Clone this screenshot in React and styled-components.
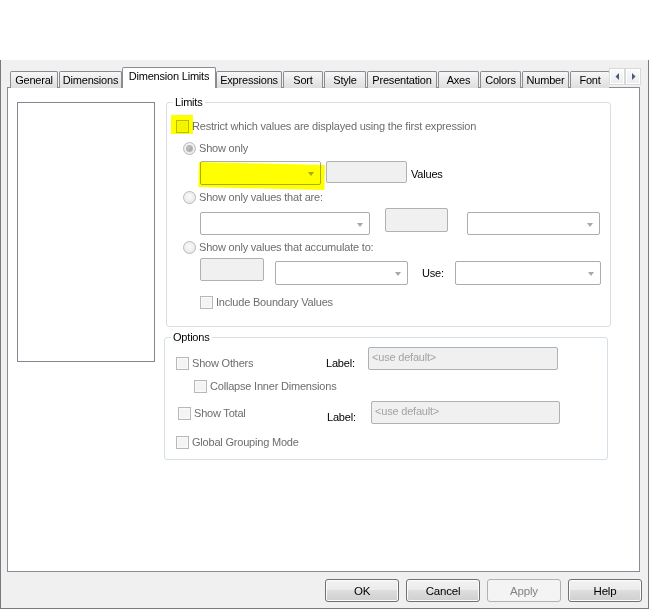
import React from 'react';
import styled, { createGlobalStyle } from 'styled-components';

const GlobalStyle = createGlobalStyle`
  html, body { margin: 0; padding: 0; background: #ffffff; }
  body {
    font-family: "Liberation Sans", Arial, sans-serif;
    font-size: 11px;
    letter-spacing: -0.2px;
    color: #000;
  }
  * { box-sizing: border-box; }
`;

const Screen = styled.div`
  width: 650px;
  height: 609px;
  padding-top: 60px;
  background: #fff;
`;

const Dialog = styled.div`
  width: 649px;
  height: 549px;
  background: #f0f0f0;
  border: 1px solid #7a7a7a;
  border-top: none;
  display: flex;
  flex-direction: column;
  padding: 7px 0 6px 0;
`;

const TabRow = styled.div`
  display: flex;
  height: 20px;
  padding-left: 9px;
  position: relative;
  z-index: 2;
`;

const TabList = styled.div`
  display: flex;
  align-items: flex-end;
  width: 599px;
  height: 21px;
  overflow: hidden;
`;

const Tab = styled.div`
  flex: none;
  width: ${p => p.$w}px;
  margin-right: ${p => p.$mr}px;
  height: ${p => (p.$active ? 21 : 17)}px;
  border: 1px solid #898c95;
  border-bottom: none;
  border-radius: 2px 2px 0 0;
  background: ${p => (p.$active ? '#ffffff' : 'linear-gradient(#f7f7f7, #e9e9e9 55%, #dedede)')};
  display: flex;
  align-items: center;
  justify-content: center;
  padding-bottom: ${p => (p.$active ? 4 : 0)}px;
  white-space: nowrap;
  color: #000;
`;

const TabScroll = styled.div`
  display: flex;
  margin-top: 1px;
  height: 17px;
`;

const ScrollBtn = styled.div`
  width: 16px;
  height: 17px;
  border: 1px solid #d9d9d9;
  background: linear-gradient(#fbfbfb, #ececec);
  display: flex;
  align-items: center;
  justify-content: center;
  box-shadow: inset 0 0 0 1px #ffffff;
`;

const Panel = styled.div`
  margin-left: 6px;
  width: 633px;
  height: 485px;
  border: 1px solid #898c95;
  background: #fff;
  display: flex;
  padding: 14px 0 0 9px;
`;

const ListBox = styled.div`
  flex: none;
  width: 138px;
  height: 260px;
  border: 1px solid #828790;
  background: #fff;
`;

const Column = styled.div`
  display: flex;
  flex-direction: column;
`;

const GroupBox = styled.div`
  position: relative;
  margin-left: ${p => p.$ml}px;
  margin-top: ${p => p.$mt}px;
  width: ${p => p.$w}px;
  height: ${p => p.$h}px;
  border: 1px solid #d5dfe5;
  border-radius: 3px;
  display: flex;
  flex-direction: column;
`;

const GroupTitle = styled.span`
  position: absolute;
  top: -7px;
  left: 6px;
  padding: 0 2px;
  background: #fff;
  line-height: 13px;
  color: #000;
`;

const Line = styled.div`
  display: flex;
  align-items: ${p => p.$align || 'center'};
  margin-top: ${p => p.$mt}px;
  padding-left: ${p => p.$pl}px;
  height: ${p => p.$h || 16}px;
`;

const Check = styled.div`
  display: flex;
  align-items: center;
  gap: 3px;
  height: 16px;
  flex: none;
  width: ${p => (p.$w ? `${p.$w}px` : 'auto')};
  align-self: ${p => p.$self || 'auto'};
  color: #6d6d6d;
  white-space: nowrap;
`;

const Box = styled.span`
  position: relative;
  flex: none;
  width: 13px;
  height: 13px;
  border: 1px solid #b8b8b8;
  background: #f4f4f4;
  box-shadow: inset 0 0 0 1px #f9f9f9;
`;

const Radio = styled.span`
  flex: none;
  width: 13px;
  height: 13px;
  border-radius: 50%;
  border: 1px solid #b9b9b9;
  background: radial-gradient(circle at 50% 40%, #fafafa, #e4e4e4);
  display: flex;
  align-items: center;
  justify-content: center;
  &::after {
    content: '';
    display: ${p => (p.$checked ? 'block' : 'none')};
    width: 5px;
    height: 5px;
    border-radius: 50%;
    background: radial-gradient(circle at 40% 40%, #c6c6c6, #8f8f8f);
    box-shadow: 0 0 0 1px #b5b5b5;
  }
`;

const Combo = styled.div`
  position: relative;
  flex: none;
  width: ${p => p.$w}px;
  height: ${p => p.$h || 23}px;
  margin-left: ${p => p.$ml || 0}px;
  margin-top: ${p => p.$mt || 0}px;
  border: 1px solid #acacac;
  border-radius: 2px;
  background: #fff;
  &::after {
    content: '';
    position: absolute;
    right: 6px;
    top: 50%;
    margin-top: -1px;
    border-left: 3.5px solid transparent;
    border-right: 3.5px solid transparent;
    border-top: 4px solid #a8a8a8;
  }
`;

const TextBox = styled.div`
  flex: none;
  width: ${p => p.$w}px;
  height: ${p => p.$h || 23}px;
  margin-left: ${p => p.$ml || 0}px;
  margin-top: ${p => p.$mt || 0}px;
  align-self: ${p => p.$self || 'auto'};
  border: 1px solid #adb2b5;
  border-radius: 2px;
  background: #f0f0f0;
  color: #a3a3a3;
  padding: 2px 3px;
  line-height: 14px;
  white-space: nowrap;
`;

const FieldLabel = styled.span`
  flex: none;
  width: ${p => (p.$w ? `${p.$w}px` : 'auto')};
  margin-left: ${p => p.$ml || 0}px;
  margin-top: ${p => p.$mt || 0}px;
  line-height: ${p => p.$lh || 16}px;
  color: #000;
  white-space: nowrap;
`;

const Highlight = styled.span`
  position: absolute;
  left: ${p => p.$x}px;
  top: ${p => p.$y}px;
  width: ${p => p.$w}px;
  height: ${p => p.$h}px;
  background: #ffff00;
  mix-blend-mode: multiply;
  transform: rotate(${p => p.$rot || 0}deg);
  transform-origin: left top;
  pointer-events: none;
  z-index: 3;
`;

const ButtonRow = styled.div`
  display: flex;
  justify-content: flex-end;
  gap: 7px;
  margin-top: 7px;
  padding-right: 6px;
`;

const Button = styled.div`
  width: 74px;
  height: 23px;
  border: 1px solid ${p => (p.$disabled ? '#adb2b5' : '#707070')};
  border-radius: 3px;
  background: ${p =>
    p.$disabled
      ? '#f4f4f4'
      : 'linear-gradient(#f2f2f2 0%, #ebebeb 50%, #dddddd 50%, #cfcfcf 100%)'};
  box-shadow: inset 0 0 0 1px ${p => (p.$disabled ? '#f4f4f4' : '#fcfcfc')};
  color: ${p => (p.$disabled ? '#838383' : '#000')};
  display: flex;
  align-items: center;
  justify-content: center;
  font-size: 11.5px;
`;

const Tri = ({ dir }) => (
  <svg width="5" height="7" viewBox="0 0 5 7">
    {dir === 'left' ? (
      <path d="M4 0 L0.5 3.5 L4 7 Z" fill="#4a5a78" />
    ) : (
      <path d="M1 0 L4.5 3.5 L1 7 Z" fill="#4a5a78" />
    )}
  </svg>
);

const tabs = [
  ['General', 48, 1],
  ['Dimensions', 63, 0],
  ['Dimension Limits', 94, 0, true],
  ['Expressions', 66, 1],
  ['Sort', 40, 1],
  ['Style', 42, 1],
  ['Presentation', 70, 1],
  ['Axes', 41, 1],
  ['Colors', 41, 1],
  ['Number', 47, 1],
  ['Font', 40, 0],
];

export default function App() {
  return (
    <>
      <GlobalStyle />
      <Screen>
        <Dialog>
          <TabRow>
            <TabList>
              {tabs.map(([label, w, mr, active]) => (
                <Tab key={label} $w={w} $mr={mr} $active={active}>
                  {label}
                </Tab>
              ))}
            </TabList>
            <TabScroll>
              <ScrollBtn><Tri dir="left" /></ScrollBtn>
              <ScrollBtn><Tri dir="right" /></ScrollBtn>
            </TabScroll>
          </TabRow>

          <Panel>
            <ListBox />
            <Column>
              <GroupBox $ml={11} $mt={0} $w={445} $h={225}>
                <GroupTitle>Limits</GroupTitle>
                <Line $mt={15} $pl={9}>
                  <Check>
                    <Box>
                      <Highlight $x={-6} $y={-6} $w={22} $h={19} />
                    </Box>
                    Restrict which values are displayed using the first expression
                  </Check>
                </Line>
                <Line $mt={6} $pl={16}>
                  <Check><Radio $checked />Show only</Check>
                </Line>
                <Line $mt={5} $pl={33} $h={24}>
                  <Combo $w={121} $h={24}>
                    <Highlight $x={-2} $y={0} $w={126} $h={25} $rot={1.4} />
                  </Combo>
                  <TextBox $w={81} $h={22} $ml={5} $self="flex-start" />
                  <FieldLabel $ml={4} $mt={2}>Values</FieldLabel>
                </Line>
                <Line $mt={4} $pl={16}>
                  <Check><Radio />Show only values that are:</Check>
                </Line>
                <Line $mt={3} $pl={33} $h={27} $align="flex-start">
                  <Combo $w={170} $mt={4} />
                  <TextBox $w={63} $h={24} $ml={15} />
                  <Combo $w={133} $ml={19} $mt={4} />
                </Line>
                <Line $mt={4} $pl={16}>
                  <Check><Radio />Show only values that accumulate to:</Check>
                </Line>
                <Line $mt={3} $pl={33} $h={27} $align="flex-start">
                  <TextBox $w={64} $h={23} />
                  <Combo $w={133} $h={24} $ml={11} $mt={3} />
                  <FieldLabel $w={33} $ml={14} $mt={3} $lh={24}>Use:</FieldLabel>
                  <Combo $w={146} $h={24} $mt={3} />
                </Line>
                <Line $mt={9} $pl={33}>
                  <Check><Box />Include Boundary Values</Check>
                </Line>
              </GroupBox>

              <GroupBox $ml={9} $mt={10} $w={444} $h={123}>
                <GroupTitle>Options</GroupTitle>
                <Line $mt={9} $pl={11} $h={24} $align="flex-end">
                  <Check $w={150}><Box />Show Others</Check>
                  <FieldLabel $w={42}>Label:</FieldLabel>
                  <TextBox $w={190} $h={23} $self="flex-start">&lt;use default&gt;</TextBox>
                </Line>
                <Line $mt={7} $pl={29}>
                  <Check><Box />Collapse Inner Dimensions</Check>
                </Line>
                <Line $mt={7} $pl={13} $h={24} $align="flex-end">
                  <Check $w={149} $self="center"><Box />Show Total</Check>
                  <FieldLabel $w={44}>Label:</FieldLabel>
                  <TextBox $w={189} $h={23} $self="flex-start">&lt;use default&gt;</TextBox>
                </Line>
                <Line $mt={9} $pl={11}>
                  <Check><Box />Global Grouping Mode</Check>
                </Line>
              </GroupBox>
            </Column>
          </Panel>

          <ButtonRow>
            <Button>OK</Button>
            <Button>Cancel</Button>
            <Button $disabled>Apply</Button>
            <Button>Help</Button>
          </ButtonRow>
        </Dialog>
      </Screen>
    </>
  );
}
